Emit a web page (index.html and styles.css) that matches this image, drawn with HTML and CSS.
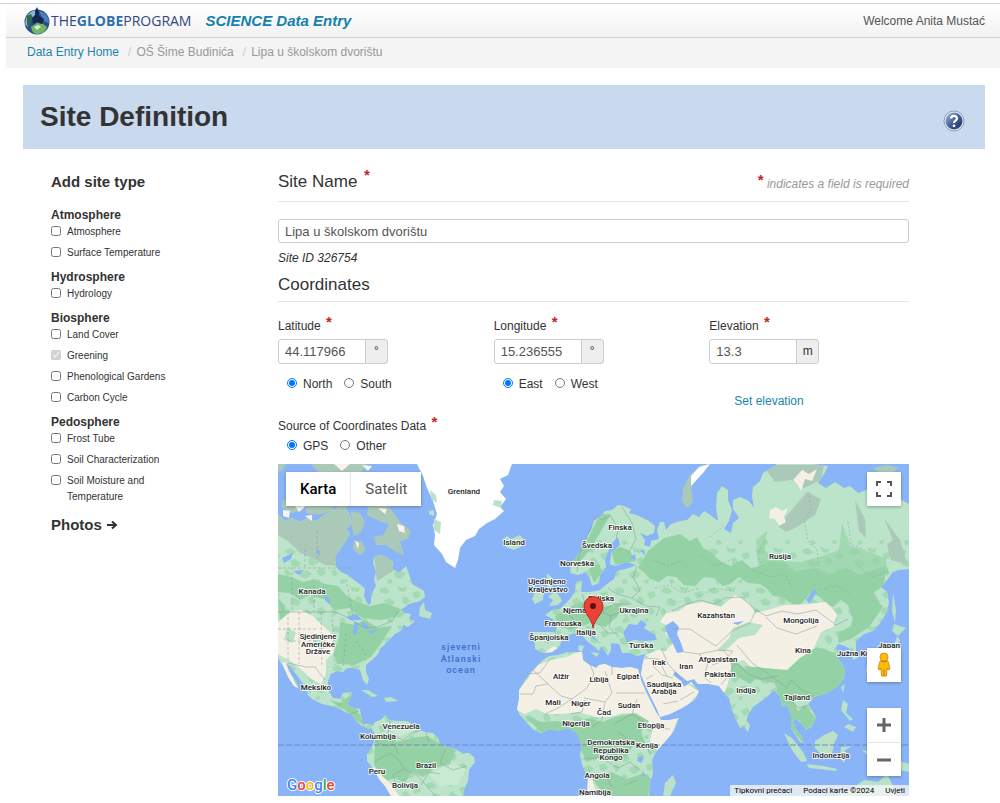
FILE: index.html
```html
<!DOCTYPE html>
<html lang="hr">
<head>
  <meta charset="UTF-8" />
  <meta name="viewport" content="width=device-width, initial-scale=1.0" />
  <title>Site Definition - SCIENCE Data Entry</title>
  <link rel="stylesheet" href="styles.css">
</head>
<body>
  <div class="page">
    <header class="topbar">
      <a class="logo" href="#">
        <svg class="logo-globe" viewBox="0 0 28 28" aria-hidden="true">
          <circle cx="14" cy="15" r="12.5" fill="#2b5089"/>
          <path d="M3 12C5 6 10 3 14 3L12 9 6 13 5 20 2 17Z" fill="#8ab6dc"/>
          <path d="M16 4C22 5 26 10 26 16L21 14 18 8Z" fill="#4b80bb"/>
          <path d="M8 20L14 16 20 17 24 20C22 25 18 27 14 27 11 27 9 25 8 20Z" fill="#70b866"/>
          <path d="M4 9L8 7 10 11 7 15 8 20 4 18Z" fill="#336b49"/>
          <path d="M14 0L16 5 16 9 21 12 19 17 14 15 10 17 9 11 12 8 12 4Z" fill="#16284e"/>
          <path d="M11 20L15 18 18 20 14 23Z" fill="#d9ecd0"/>
        </svg>
        <span class="logo-text">THE<b>GLOBE</b>PROGRAM</span>
      </a>
      <span class="app-name">SCIENCE Data Entry</span>
      <span class="welcome">Welcome Anita Mustać</span>
    </header>

    <nav class="breadcrumb">
      <a href="#">Data Entry Home</a>
      <span class="divider">/</span>
      <span>OŠ Šime Budinića</span>
      <span class="divider">/</span>
      <span>Lipa u školskom dvorištu</span>
    </nav>

    <div class="banner">
      <h1>Site Definition</h1>
      <button class="help" type="button" aria-label="Help">
        <svg viewBox="0 0 22 22">
          <defs>
            <linearGradient id="helpFill" x1="0" y1="0" x2="1" y2="1">
              <stop offset="0" stop-color="#a9bddc"/>
              <stop offset=".5" stop-color="#45639a"/>
              <stop offset="1" stop-color="#122b5d"/>
            </linearGradient>
          </defs>
          <circle cx="11" cy="11" r="10" fill="#e9eff8" stroke="#8e9db7"/>
          <circle cx="11" cy="11" r="8.5" fill="url(#helpFill)"/>
          <path d="M8 8.6C8 5 14 5 14 8.5 14 10.7 11 10.5 11 13" fill="none" stroke="#fff" stroke-width="2.2"/>
          <circle cx="11" cy="15.8" r="1.4" fill="#fff"/>
        </svg>
      </button>
    </div>

    <div class="content">
      <aside class="sidebar">
        <h2>Add site type</h2>
        <section class="group">
          <h3>Atmosphere</h3>
          <label><input type="checkbox"> Atmosphere</label>
          <label><input type="checkbox"> Surface Temperature</label>
        </section>
        <section class="group">
          <h3>Hydrosphere</h3>
          <label><input type="checkbox"> Hydrology</label>
        </section>
        <section class="group">
          <h3>Biosphere</h3>
          <label><input type="checkbox"> Land Cover</label>
          <label><input type="checkbox" checked disabled> Greening</label>
          <label><input type="checkbox"> Phenological Gardens</label>
          <label><input type="checkbox"> Carbon Cycle</label>
        </section>
        <section class="group">
          <h3>Pedosphere</h3>
          <label><input type="checkbox"> Frost Tube</label>
          <label><input type="checkbox"> Soil Characterization</label>
          <label><input type="checkbox"> Soil Moisture and Temperature</label>
        </section>
        <h2 class="photos">Photos
          <svg viewBox="0 0 12 10" aria-hidden="true"><path d="M1 5H9M6 1.5L10 5 6 8.5" fill="none" stroke="#333" stroke-width="2"/></svg>
        </h2>
      </aside>

      <main class="form">
        <div class="legend legend-first">
          <label for="siteName">Site Name <span class="req">*</span></label>
          <span class="hint"><span class="req">*</span> indicates a field is required</span>
        </div>
        <input class="text-input" type="text" id="siteName" value="Lipa u školskom dvorištu">
        <div class="site-id">Site ID 326754</div>

        <h2 class="legend">Coordinates</h2>
        <div class="fields">
          <div class="field">
            <label for="latitude">Latitude <span class="req">*</span></label>
            <div class="input-append">
              <input class="text-input" type="text" id="latitude" value="44.117966"><span class="add-on">°</span>
            </div>
            <div class="radios">
              <label><input type="radio" name="lat" checked> North</label>
              <label><input type="radio" name="lat"> South</label>
            </div>
          </div>
          <div class="field">
            <label for="longitude">Longitude <span class="req">*</span></label>
            <div class="input-append">
              <input class="text-input" type="text" id="longitude" value="15.236555"><span class="add-on">°</span>
            </div>
            <div class="radios">
              <label><input type="radio" name="lng" checked> East</label>
              <label><input type="radio" name="lng"> West</label>
            </div>
          </div>
          <div class="field">
            <label for="elevation">Elevation <span class="req">*</span></label>
            <div class="input-append">
              <input class="text-input" type="text" id="elevation" value="13.3"><span class="add-on">m</span>
            </div>
            <a class="set-elevation" href="#">Set elevation</a>
          </div>
        </div>

        <div class="source">
          <div>Source of Coordinates Data <span class="req">*</span></div>
          <div class="radios">
            <label><input type="radio" name="source" checked> GPS</label>
            <label><input type="radio" name="source"> Other</label>
          </div>
        </div>

        <div class="map">
          <svg class="world" viewBox="278 464 631 332">
            <defs>
              <clipPath id="landClip">
                <use href="#america"/><use href="#southAmerica"/><use href="#eurasia"/><use href="#africa"/>
              </clipPath>
              <pattern id="woods" width="47" height="39" patternUnits="userSpaceOnUse">
                <path fill="#a3d9b3" d="M3 4L9 2 14 6 11 9 5 8ZM21 1L27 3 31 2 29 7 23 6ZM36 8L43 6 45 11 39 14ZM8 15L13 13 19 17 16 21 10 20ZM26 13L30 11 34 16 31 20 27 18ZM2 25L6 23 9 28 5 31ZM18 27L25 24 30 28 24 33 19 31ZM35 24L41 22 44 27 40 30 36 29ZM11 34L15 33 17 37 12 38ZM33 34L38 33 37 37 34 37Z"/>
              </pattern>
              <path id="america" d="M278 514L285 521 292 518 300 522 308 518 316 521 325 514 333 511 338 507 342 511 346 509 350 514 352 524 346 529 350 533 346 541 340 549 335 557 336 567 341 572 348 575 354 580 361 585 365 589 364 596 368 605 371 603 371 595 376 586 374 579 376 572 373 563 374 557 381 555 388 558 393 562 393 569 399 573 403 569 406 566 409 574 412 584 419 588 424 591 425 597 420 601 409 604 401 610 405 613 411 614 409 619 415 621 408 627 403 625 402 630 395 634 388 641 381 648 378 654 373 659 366 665 366 672 369 679 367 685 363 680 360 670 354 668 347 668 343 672 337 671 331 674 328 681 328 690 333 698 340 699 343 693 352 692 350 699 347 704 353 708 360 709 361 717 364 724 370 724 374 727 369 729 362 726 356 721 352 715 345 712 338 708 331 706 322 704 312 699 307 694 307 688 301 681 296 674 289 665 286 663 289 671 296 682 299 689 294 686 288 677 284 668 278 658Z"/>
              <path id="southAmerica" d="M371 728L375 722 382 719 385 715 389 720 397 721 408 721 413 726 419 728 424 732 433 733 438 738 440 744 447 747 455 749 462 753 469 753 474 757 475 762 469 770 468 781 464 790 463 796 391 796 385 786 379 779 374 770 367 761 367 754 371 749 374 742 375 734Z"/>
              <path id="eurasia" d="M570 573L571 564 576 557 582 549 586 539 592 528 593 521 600 517 605 511 612 510 618 505 624 506 631 509 629 513 639 516 649 521 655 526 654 533 647 536 640 533 645 540 644 545 650 547 651 541 659 539 657 530 660 522 664 522 666 530 671 524 680 521 687 520 693 514 699 517 704 511 709 514 718 521 716 507 717 493 722 486 728 490 728 500 732 510 729 521 724 529 731 533 733 523 739 518 733 509 733 500 740 497 749 501 754 508 752 496 753 487 760 481 763 473 773 467 777 464 813 464 828 466 824 474 818 483 826 488 835 482 844 488 850 486 858 493 866 490 874 494 886 495 900 499 909 504 909 569 899 570 893 572 887 580 881 587 887 592 889 602 887 612 881 622 873 631 864 634 856 641 856 651 859 657 853 660 851 650 845 646 838 644 835 649 842 653 838 658 845 669 844 678 838 686 829 692 818 696 813 697 812 700 808 704 812 710 816 718 811 727 806 730 802 724 795 718 793 722 796 730 801 735 804 743 800 742 795 734 791 728 791 714 787 705 782 707 780 697 774 690 768 696 760 702 753 707 748 715 745 726 740 728 737 722 732 710 729 698 724 693 719 686 709 684 698 684 694 679 687 681 681 676 675 671 673 675 681 681 684 687 691 682 699 691 695 700 682 708 670 714 660 717 657 709 650 695 645 684 641 674 643 662 646 654 637 656 630 653 622 653 619 644 611 643 611 650 608 656 604 650 600 643 594 637 590 631 587 631 592 638 602 645 599 651 595 647 588 642 580 633 571 634 563 638 559 647 552 652 543 653 535 649 534 632 556 632 557 624 551 618 545 615 552 610 560 609 570 599 575 592 576 582 582 581 581 592 590 592 600 590 607 584 614 579 617 571 629 568 636 565 627 562 615 566 610 564 611 553 620 545 618 537 611 544 608 552 605 559 606 567 600 575 599 583 592 586 590 579 586 572 578 575Z"/>
              <path id="africa" d="M538 665L544 659 549 656 558 655 568 652 582 652 583 660 588 664 596 668 599 665 605 664 612 667 622 668 630 667 638 669 641 680 646 692 652 704 656 712 661 720 670 720 679 718 674 731 665 742 656 752 652 760 653 773 650 783 649 796 587 796 588 778 582 765 580 755 582 747 579 737 576 732 568 728 558 731 549 729 541 733 534 730 528 724 520 715 517 709 519 699 519 690 526 679 530 673Z"/>
            </defs>
            <rect x="278" y="464" width="631" height="332" fill="#8ab4f8"/>

            <!-- land masses -->
            <g fill="#bce4ca">
              <use href="#america"/><use href="#southAmerica"/><use href="#eurasia"/><use href="#africa"/>
            </g>

            <!-- vegetation, tundra and desert -->
            <g clip-path="url(#landClip)">
              <rect x="278" y="540" width="631" height="256" fill="url(#woods)"/>
              <path fill="#abc9b8" d="M278 508H352V538L338 550 336 566 325 565 310 557 300 553 288 541 278 535ZM374 555L388 556 395 570 385 576 377 581Z"/>
              <path fill="#94d2a5" d="M278 574L291 577 303 582 314 579 325 584 338 586 346 595 357 602 370 606 384 603 401 609 396 617 380 620 362 618 350 608 334 610 326 600 310 595 300 600 290 593 278 592Z"/>
              <path fill="#94d2a5" d="M278 598L285 606 287 620 280 625ZM340 622L355 625 365 620 378 628 392 626 382 642 371 657 355 665 337 664 333 650 339 640ZM329 700L342 703 350 695 364 725 355 720 345 710Z"/>
              <path fill="#f5f0e6" d="M278 622L290 612 301 610 313 616 323 626 333 635 335 651 326 660 326 674 321 684 311 679 303 671 292 662 278 654ZM286 662L290 672 298 689 291 684 282 663Z"/>
              <path fill="#b9e2c8" d="M287 628L296 632 293 643 284 640ZM314 635L326 639 323 651 313 646Z"/>
              <path fill="#94d2a5" d="M375 740L389 733 397 742 411 738 427 736 441 744 456 750 450 764 435 768 423 777 412 772 405 783 395 778 386 781 374 765Z"/>
              <path fill="#c9e9d3" d="M385 722L405 724 416 730 400 736 390 730ZM429 775L442 767 455 764 466 769 458 785 440 786Z"/>
              <path fill="#f5f0e6" d="M372 765L381 775 391 784 399 796H386Z"/>
              <path fill="#94d2a5" d="M611 551L620 547 629 550 636 561 626 563 615 565ZM648 551L664 538 680 534 690 541 697 537 703 548 712 553 721 562 731 566 742 560 751 568 760 566 772 561 785 562 795 572 803 570 817 568 827 575 846 568 860 575 886 566 884 586 874 592 880 606 862 624 852 617 848 605 841 600 833 607 826 604 820 597 811 593 801 604 792 604 782 597 773 596 766 588 760 584 748 583 739 577 730 584 723 586 714 578 704 577 695 586 684 585 676 577 667 576 659 582 650 579 645 573 638 568Z"/>
              <path fill="#94d2a5" d="M767 531L765 551 779 561 801 562 819 557 839 550 842 523 850 545 885 558 889 574 845 581 803 590 759 572 756 540Z" opacity=".65"/>
              <path fill="#abc9b8" d="M763 465H824L821 480 804 488 791 480 775 482ZM807 492L821 499 815 515 797 527 786 532 778 526 790 512ZM855 500L865 519 866 538 859 531 857 516ZM884 518L900 540 907 564 891 560 887 545 893 540Z"/>
              <path fill="#f5f0e6" d="M793 480L802 470 809 474 817 469 812 481 805 479 801 491 797 484ZM770 510L776 507 782 511 788 508 784 517 786 522 779 526 775 519 769 518Z"/>
              <path fill="#94d2a5" d="M555 616L571 606 589 600 602 607 622 603 617 617 605 627 590 623 574 629 558 625ZM600 514L611 514 590 550 577 565 573 561 588 538ZM589 569L599 563 602 572 594 583Z"/>
              <path fill="#f5f0e6" d="M660 622L666 613 679 611 687 605 703 602 721 607 735 595 748 602 755 613 768 610 784 605 799 605 826 602 837 614 833 627 821 632 814 648 801 660 790 672 776 677 754 671 744 660 732 664 730 676 725 692 700 688 681 680 700 692 682 711 660 719 641 674 643 656 658 650 666 651 673 643 665 633 673 628Z"/>
              <path fill="#b9e2c8" d="M733 628L748 622 763 625 755 635 739 638 724 652 717 650 729 638Z"/>
              <path fill="#94d2a5" d="M787 670L800 658 817 647 838 654 849 668 839 686 818 699 796 694 784 700 774 683 755 679 744 666ZM776 690L791 694 798 711 805 705 817 720 807 730 798 719 805 746 789 725ZM730 657L744 668 757 678 750 684 732 674Z"/>
              <path fill="#94d2a5" d="M857 599L873 596 883 607 869 627 851 639 838 643 839 633 851 626Z"/>
              <path fill="#f5f0e6" d="M517 710L519 690 538 665 551 660 566 657 584 650 640 667 662 718 678 718 671 735 657 750 650 741 653 728 637 714 623 713 610 717 595 717 579 712 562 714 547 714 536 709 525 714Z"/>
              <path fill="#94d2a5" d="M525 716L542 722 556 721 575 724 588 718 602 722 615 717 635 713 649 721 641 732 646 745 633 745 627 757 616 763 601 757 586 762 579 745 574 731 541 732Z"/>
              <path fill="#94d2a5" d="M591 777L611 772 627 779 644 773 652 779 648 796 607 796 599 788Z"/>
              <path fill="#f5f0e6" d="M543 654L554 646 558 648 552 653ZM583 772L592 778 597 796 584 796Z"/>
            </g>

            <!-- islands -->
            <g fill="#b9e2c8">
              <path d="M502 540L507 536 511 539 520 535 525 541 522 546 514 550 506 547Z"/>
              <path d="M547 573L552 578 551 586 558 594 562 601 558 605 549 606 553 600 548 597 553 592 547 586ZM535 592L544 590 543 600 535 604 532 599Z"/>
              <path d="M420 607L424 602 425 610 432 613 430 619 419 616ZM361 690L368 690 378 696 372 697ZM384 698L391 697 398 701 386 702Z"/>
              <path d="M784 733L792 738 803 752 807 761 801 762 792 750ZM815 741L824 735 833 731 838 735 834 744 832 754 821 754 815 748ZM807 764L824 766 837 769 836 771 809 768ZM841 747L852 746 844 751 852 757 846 756 844 763 840 758ZM843 700L848 704 846 713 853 719 850 721 841 710ZM848 724L856 727 853 732 844 727ZM746 720L750 725 748 732 745 728ZM841 687L845 684 843 693ZM871 666L883 657 893 649 897 636 900 640 896 654 886 663 873 669ZM894 624L906 628 898 636 892 631ZM893 593L896 610 895 623 892 611ZM866 667L870 671 867 676Z"/>
              <path d="M663 796L665 783 673 775 676 783 670 796ZM837 796L850 790 864 780 878 782 887 774 892 784 897 796ZM862 750L877 753 890 758 909 764V772L890 768 876 763Z"/>
              <path d="M579 645L584 646 582 652 578 650ZM590 652L599 653 597 657ZM643 657L649 655 646 659Z"/>
            </g>
            <g fill="#abc9b8">
              <path d="M368 507L381 503 391 509 400 522 411 531 408 539 400 541 404 555 394 551 386 545 376 545 374 537 383 535 389 524 377 520 367 515ZM351 511L360 513 365 521 361 532 354 536 352 526ZM283 500L302 502 303 510 292 513 281 507ZM306 506L328 502 335 510 318 515 306 513ZM354 540L362 542 366 550 360 555 353 549ZM338 501L348 503 345 511 337 508Z"/>
              <path d="M687 508L682 501 683 488 690 475 702 465 711 464 698 475 691 488 693 502ZM278 464H286L282 471H278ZM311 464H367L361 472H318ZM873 468L885 465 898 467 894 472 880 473Z"/>
            </g>
            <g fill="#f7f4ee">
              <path d="M283 510L290 511 289 518 283 516ZM293 503L303 499 306 506 299 512ZM305 516L312 515 312 521ZM397 524L404 526 405 533 399 531ZM378 508L387 509 385 514ZM355 541L359 543 358 549ZM334 464L350 464 342 471ZM362 465L372 466 368 471Z"/>
              <path fill="#fff" d="M417 464L423 476 427 488 433 501 437 514 433 525 435 535 434 545 442 554 446 562 455 568 458 560 460 548 466 540 475 536 479 529 487 523 495 519 504 511 500 507 506 499 500 492 504 486 500 479 508 475 512 464Z"/>
              <path fill="#fff" d="M699 467L710 464 703 473 691 486 691 476Z"/>
            </g>
            <path fill="#b9e2c8" d="M430 490L436 495 437 503 431 499ZM434 519L441 522 440 534 434 530ZM429 511L434 510 434 516 429 514ZM494 500L502 501 501 508 493 505Z"/>

            <!-- inland water -->
            <g fill="#8ab4f8">
              <path d="M623 633L629 624 637 625 641 620 647 624 644 628 655 635 657 640 645 641 634 640 627 642ZM665 626L673 621 679 627 677 634 681 643 684 652 677 653 673 644 668 636Z"/>
              <path d="M806 600L812 592 815 588 816 593 810 603ZM732 623L744 621 738 625ZM629 558L635 554 636 560ZM640 551L644 549 645 555Z"/>
              <path d="M282 558L293 553 291 559 284 563ZM293 571L304 570 299 575ZM316 549L321 551 319 557ZM324 593L331 601 329 604 325 600ZM346 617L357 614 362 620 351 620ZM354 622L359 623 356 636 353 632ZM361 621L369 626 366 629 362 627ZM367 631L379 629 371 634ZM638 757L643 756 642 763 637 761ZM643 770L645 778 642 775Z"/>
            </g>

            <!-- borders and rivers -->
            <g fill="none" stroke="#8d9c94" stroke-width=".7" opacity=".75">
              <path d="M278 612H335L347 617 355 622 365 628 378 627 392 621 398 611M288 663L306 667 315 667 325 680M338 706L344 700M350 714L359 711M362 720L364 726"/>
              <path d="M390 721L388 733 403 740 412 733 422 730M426 733L429 742M375 741L386 746 394 744 398 754M374 762L390 753 399 760 404 769 393 775 397 787M404 769L418 776 429 789 436 796M445 750L440 763 453 770 467 766M421 785L429 772 440 774"/>
              <path d="M550 659L540 673 527 674M548 684L536 686 533 694H520M533 670L561 696 572 699 587 688 594 674 590 664M605 671L612 693 605 702 584 698M612 675V667M616 693H645M572 699L558 708 545 714M585 700L582 712 571 714M605 702L602 720 592 727M637 699L632 714 614 724M632 714L645 723 653 728 670 729M618 732L634 744 646 744 650 754M585 745L603 744 602 757 583 759M603 759L618 768 630 762 639 770M590 779L607 778 612 787M625 785L638 780"/>
              <path d="M596 516L588 534 579 555 577 572M600 520L611 516 618 529 616 539M622 507L632 523 636 539 628 554M637 566L633 577 640 590 632 598 617 594 608 588M632 598L646 606 660 607 656 616M613 604L632 604M582 594L585 603 579 611 589 617 601 612 611 606M559 626L571 629 574 620 566 611M600 611L611 616 623 611 629 621M599 624L608 633 618 633M611 616L609 627 619 637"/>
              <path d="M672 611L687 604 700 600 714 604 725 598 741 597 756 610 766 616 782 611 797 614 816 610 824 616 836 625 848 619M766 617L777 628 796 634 817 626M673 629L690 629 705 639 716 646 732 631 750 623 756 610M684 652L699 654 708 662 704 677 711 683M662 650L668 664 682 680M645 658L658 659 667 676M653 666L662 675 673 678M653 675L646 679M699 654L719 650 733 651 724 661 712 665M725 652L735 664 728 676 721 685M736 663L750 675 762 679 778 676M737 645L752 663 774 678 786 687M786 689L791 680 802 690 814 696M791 701L799 708 807 706M680 700L694 692M663 704L678 701"/>
              <path d="M809 492L811 510 804 519 808 541 817 549 819 566M848 522L851 544 865 550M859 567L874 577 888 571M710 537L724 526M699 596L716 588 731 591M652 560L668 566 681 561 690 571M655 588L670 585 683 593 700 588M700 555L716 566 730 560M752 570L770 577 785 574 792 588M820 590L836 585 850 594M765 540L757 555 762 566" stroke-dasharray="2 2"/>
              <path d="M278 568H352M317 531V566M305 549V568M292 567V610M314 585V612M346 579L353 616M288 612V660M299 612V664M278 629H318M288 641H318M321 612L322 667M332 614L335 665M346 634L343 666M356 641L366 655" stroke-dasharray="3 2"/>
            </g>
            <path d="M278 745H909" stroke="#7587bb" stroke-width="1" stroke-dasharray="6 2"/>

            <g class="countries">
              <text x="464" y="494">Grenland</text>
              <text x="514" y="545">Island</text>
              <text x="312" y="594">Kanada</text>
              <text x="318" y="639">Sjedinjene</text>
              <text x="318" y="647">Američke</text>
              <text x="318" y="654">Države</text>
              <text x="316" y="690">Meksiko</text>
              <text x="401" y="729">Venezuela</text>
              <text x="378" y="739">Kolumbija</text>
              <text x="426" y="768">Brazil</text>
              <text x="377" y="774">Peru</text>
              <text x="405" y="788">Bolivija</text>
              <text x="620" y="530">Finska</text>
              <text x="597" y="548">Švedska</text>
              <text x="577" y="566">Norveška</text>
              <text x="547" y="584">Ujedinjeno</text>
              <text x="548" y="592">Kraljevstvo</text>
              <text x="601" y="601">Poljska</text>
              <text x="581" y="613">Njemačka</text>
              <text x="634" y="613">Ukrajina</text>
              <text x="563" y="626">Francuska</text>
              <text x="586" y="635">Italija</text>
              <text x="549" y="640">Španjolska</text>
              <text x="780" y="559">Rusija</text>
              <text x="716" y="618">Kazahstan</text>
              <text x="801" y="623">Mongolija</text>
              <text x="641" y="648">Turska</text>
              <text x="659" y="665">Irak</text>
              <text x="686" y="669">Iran</text>
              <text x="718" y="662">Afganistan</text>
              <text x="720" y="677">Pakistan</text>
              <text x="803" y="653">Kina</text>
              <text x="889" y="648">Japan</text>
              <text x="860" y="656">Južna Koreja</text>
              <text x="561" y="679">Alžir</text>
              <text x="599" y="682">Libija</text>
              <text x="628" y="679">Egipat</text>
              <text x="664" y="687">Saudijska</text>
              <text x="664" y="694">Arabija</text>
              <text x="553" y="705">Mali</text>
              <text x="581" y="706">Niger</text>
              <text x="604" y="715">Čad</text>
              <text x="629" y="708">Sudan</text>
              <text x="576" y="726">Nigerija</text>
              <text x="651" y="728">Etiopija</text>
              <text x="611" y="745">Demokratska</text>
              <text x="611" y="753">Republika</text>
              <text x="611" y="760">Kongo</text>
              <text x="647" y="748">Kenija</text>
              <text x="597" y="778">Angola</text>
              <text x="595" y="795">Namibija</text>
              <text x="746" y="693">Indija</text>
              <text x="797" y="700">Tajland</text>
              <text x="831" y="758">Indonezija</text>
            </g>
            <g class="ocean">
              <text x="461" y="650">sjeverni</text>
              <text x="461" y="662">Atlanski</text>
              <text x="461" y="673">ocean</text>
            </g>

            <!-- marker -->
            <path d="M593 628C592 618 584 614 584 606A9 9 0 0 1 603 606C603 614 595 618 593 628Z" fill="#ea4335" stroke="#b31412" stroke-width=".8"/>
            <circle cx="593" cy="606" r="3" fill="#5c1010"/>
          </svg>

          <div class="map-type">
            <button class="active" type="button">Karta</button>
            <button type="button">Satelit</button>
          </div>
          <button class="map-btn fullscreen" type="button" aria-label="Fullscreen">
            <svg viewBox="0 0 18 18"><path d="M2 6V2H6M12 2H16V6M16 12V16H12M6 16H2V12" fill="none" stroke="#555" stroke-width="2"/></svg>
          </button>
          <div class="map-side">
            <button class="map-btn" type="button" aria-label="Street View">
              <svg class="pegman" viewBox="0 0 16 26">
                <path d="M4 9Q8 6 12 9L14 17 12 18 11 16 10.500 24H5.500L5 16 4 18 2 17Z" fill="#fbbc04" stroke="#d9931c"/>
                <circle cx="8" cy="5" r="4" fill="#fbbc04" stroke="#d9931c"/>
                <path d="M5 9Q8 11 11 9M8 17V24" fill="none" stroke="#c37a16"/>
              </svg>
            </button>
            <div class="zoom">
              <button type="button" aria-label="Zoom in"><svg viewBox="0 0 16 16"><path d="M1 8H15M8 1V15" stroke="#666" stroke-width="3"/></svg></button>
              <button type="button" aria-label="Zoom out"><svg viewBox="0 0 16 16"><path d="M1 8H15" stroke="#666" stroke-width="3"/></svg></button>
            </div>
          </div>
          <a class="google" href="#"><span class="b">G</span><span class="r">o</span><span class="y">o</span><span class="b">g</span><span class="g">l</span><span class="r">e</span></a>
          <div class="map-terms">
            <button type="button">Tipkovni prečaci</button>
            <span>Podaci karte ©2024</span>
            <a href="#">Uvjeti</a>
          </div>
        </div>
      </main>
    </div>
  </div>
</body>
</html>
```
FILE: styles.css
```css
* {
  box-sizing: border-box;
}

body {
  margin: 0;
  padding-top: 3px;
  font-family: "Liberation Sans", Arial, sans-serif;
  font-size: 12px;
  line-height: 16px;
  color: #333;
  background-color: #fff;
}

a {
  color: #1b86ac;
  text-decoration: none;
}

button {
  margin: 0;
  padding: 0;
  border: 0;
  background: none;
  cursor: pointer;
}

h1, h2, h3 {
  margin: 0;
}

.page {
  border-top: 1px solid #d2d2d2;
  padding-left: 6px;
}

.topbar {
  display: flex;
  align-items: center;
  height: 34px;
  padding: 0 15px 0 17px;
  border-bottom: 1px solid #d0d0d0;
  background: linear-gradient(#fff, #f2f2f2);
}

.logo {
  display: flex;
  align-items: center;
}

.logo-globe {
  width: 28px;
  height: 28px;
}

.logo-text {
  font-family: "Open Sans", sans-serif;
  font-size: 14px;
  color: #34477f;
}

.logo-text b {
  color: #2f6eb0;
}

.app-name {
  margin-left: 14px;
  font-size: 15px;
  font-weight: bold;
  font-style: italic;
  color: #1680ad;
}

.welcome {
  margin-left: auto;
  color: #555;
}

.breadcrumb {
  display: flex;
  gap: 5px;
  padding: 6px 21px 8px;
  background-color: #f4f4f4;
  color: #999;
}

.breadcrumb .divider {
  margin-left: 4px;
  color: #ccc;
}

.banner {
  display: flex;
  align-items: center;
  justify-content: space-between;
  height: 64px;
  margin: 17px 15px 0 17px;
  padding: 0 20px 0 17px;
  background-color: #c9d9ee;
}

.banner h1 {
  font-size: 28px;
  line-height: 32px;
}

.help svg {
  display: block;
  width: 22px;
  height: 22px;
  margin-top: 8px;
}

.content {
  display: grid;
  grid-template-columns: 227px 1fr;
  margin: 21px 91px 4px 45px;
}

/* sidebar */
.sidebar {
  width: 130px;
}

.sidebar h2 {
  font-size: 15px;
  line-height: 24px;
  margin-bottom: 13px;
}

.sidebar .photos {
  display: flex;
  align-items: center;
  gap: 4px;
  margin: 0;
}

.photos svg {
  width: 12px;
  height: 10px;
}

.group {
  padding-bottom: 4px;
}

/* keeps the last label's margin inside the group */
.group::after {
  content: "";
  display: table;
}

.group h3 {
  font-size: 12px;
  line-height: 17px;
}

.group label {
  display: flex;
  gap: 6px;
  margin-bottom: 5px;
  font-size: 10px;
}

.group label:last-child {
  margin-bottom: 4px;
}

.group input {
  flex: none;
  width: 10px;
  height: 10px;
  margin: 2px 0 0;
}

/* form */
.legend {
  margin: 7px 0 16px;
  padding-bottom: 4px;
  border-bottom: 1px solid #e5e5e5;
  font-size: 17px;
  font-weight: normal;
  line-height: 24px;
}

.legend-first {
  display: flex;
  justify-content: space-between;
  margin: 0 0 17px;
  padding-bottom: 3px;
}

.hint {
  font-size: 12px;
  font-style: italic;
  line-height: 28px;
  color: #999;
}

.req {
  margin-left: 2px;
  font-size: 15px;
  font-style: normal;
  font-weight: bold;
  line-height: 0;
  vertical-align: 3px;
  color: #c3242c;
}

.legend label .req {
  vertical-align: 7px;
}

.text-input {
  display: block;
  width: 100%;
  height: 24px;
  padding: 0 6px;
  border: 1px solid #ccc;
  border-radius: 3px;
  font-family: inherit;
  font-size: 13px;
  color: #555;
}

.site-id {
  margin-top: 7px;
  font-style: italic;
}

.fields {
  display: grid;
  grid-template-columns: repeat(3, 1fr);
  gap: 16px;
}

.field > label {
  display: block;
}

.input-append {
  display: flex;
  width: 110px;
  margin-top: 5px;
}

.input-append .text-input {
  flex: 1;
  min-width: 0;
  height: 25px;
  border-radius: 3px 0 0 3px;
}

.add-on {
  width: 23px;
  margin-left: -1px;
  border: 1px solid #ccc;
  border-radius: 0 3px 3px 0;
  background-color: #eee;
  line-height: 23px;
  text-align: center;
}

.radios {
  display: flex;
  gap: 12px;
  padding-left: 9px;
}

.field .radios {
  margin-top: 12px;
}

.radios label {
  display: flex;
  gap: 6px;
}

.radios input {
  width: 10px;
  height: 10px;
  margin: 2px 0 0;
}

.set-elevation {
  display: inline-block;
  margin: 29px 0 0 25px;
}

.source {
  margin-top: 9px;
}

.source .radios {
  margin-top: 4px;
}

/* map */
.map {
  position: relative;
  margin-top: 10px;
  font-family: Roboto, sans-serif;
}

.world {
  display: block;
  width: 100%;
}

.world text {
  text-anchor: middle;
  font-weight: 500;
}

.countries {
  font-size: 8px;
  fill: #222;
  stroke: #fff;
  stroke-width: 2px;
  stroke-opacity: 0.8;
  stroke-linejoin: round;
  paint-order: stroke;
}

.ocean {
  font-size: 9px;
  letter-spacing: 1px;
  fill: #3d6fc9;
}

.map-type {
  position: absolute;
  top: 8px;
  left: 8px;
  display: flex;
  background-color: #fff;
  box-shadow: 0 1px 3px rgba(0, 0, 0, 0.3);
}

.map-type button {
  height: 34px;
  padding: 0 14px;
  font-family: inherit;
  font-size: 15px;
  color: #565656;
}

.map-type .active {
  border-right: 1px solid #e6e6e6;
  font-weight: 500;
  color: #000;
}

.map-btn,
.zoom {
  width: 34px;
  background-color: #fff;
  box-shadow: 0 1px 3px rgba(0, 0, 0, 0.3);
}

.map-btn {
  display: flex;
  align-items: center;
  justify-content: center;
  height: 34px;
}

.map-btn svg {
  width: 18px;
  height: 18px;
}

.map-btn .pegman {
  width: 16px;
  height: 26px;
}

.fullscreen {
  position: absolute;
  top: 8px;
  right: 8px;
}

.map-side {
  position: absolute;
  right: 8px;
  bottom: 20px;
  display: flex;
  flex-direction: column;
  gap: 26px;
}

.zoom button {
  display: flex;
  align-items: center;
  justify-content: center;
  width: 100%;
  height: 34px;
}

.zoom button + button {
  border-top: 1px solid #e6e6e6;
}

.zoom svg {
  width: 16px;
  height: 16px;
}

.google {
  position: absolute;
  left: 9px;
  bottom: 3px;
  font-size: 15px;
  font-weight: 500;
  text-shadow: 0 0 1px #fff, 1px 0 #fff, -1px 0 #fff, 0 1px #fff, 0 -1px #fff;
}

.google .b { color: #4285f4; }
.google .r { color: #ea4335; }
.google .y { color: #fbbc04; }
.google .g { color: #34a853; }

.map-terms {
  position: absolute;
  right: 0;
  bottom: 0;
  display: flex;
  gap: 11px;
  padding: 0 4px;
  background-color: rgba(245, 245, 245, 0.8);
  font-size: 8px;
  line-height: 11px;
  color: #000;
}

.map-terms button,
.map-terms a {
  font: inherit;
  color: #000;
}
```
